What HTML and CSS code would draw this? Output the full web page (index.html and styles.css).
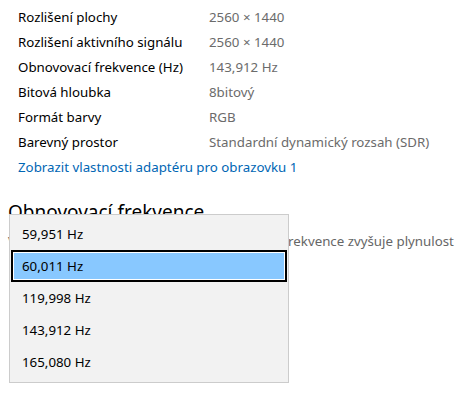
FILE: index.html
```html
<!DOCTYPE html>
<html lang="cs">
<head>
    <meta charset="UTF-8">
    <title>Rozšířené nastavení zobrazení</title>
    <link rel="stylesheet" href="styles.css">
</head>
<body>
    <div class="props">
        <div class="prop-row"><span class="label">Rozlišení plochy</span><span class="value">2560 × 1440</span></div>
        <div class="prop-row"><span class="label">Rozlišení aktivního signálu</span><span class="value">2560 × 1440</span></div>
        <div class="prop-row"><span class="label">Obnovovací frekvence (Hz)</span><span class="value">143,912 Hz</span></div>
        <div class="prop-row"><span class="label">Bitová hloubka</span><span class="value">8bitový</span></div>
        <div class="prop-row"><span class="label">Formát barvy</span><span class="value">RGB</span></div>
        <div class="prop-row"><span class="label">Barevný prostor</span><span class="value">Standardní dynamický rozsah (SDR)</span></div>
        <a class="adapter-link" href="#">Zobrazit vlastnosti adaptéru pro obrazovku 1</a>
    </div>

    <div class="refresh-section">
        <h2>Obnovovací frekvence</h2>
        <p class="hint">Vyberte obnovovací frekvenci displeje. Vyšší frekvence zvyšuje plynulost</p>

        <!-- open frequency list, drawn over the section -->
        <ul class="dropdown">
            <li>59,951 Hz</li>
            <li class="selected">60,011 Hz</li>
            <li>119,998 Hz</li>
            <li>143,912 Hz</li>
            <li>165,080 Hz</li>
        </ul>
    </div>
</body>
</html>
```

FILE: styles.css
```css
* {
    margin: 0;
    padding: 0;
    box-sizing: border-box;
}

html, body {
    min-height: 398px;
}

body {
    font-family: "Noto Sans", "Open Sans", sans-serif;
    font-size: 13.3px;
    color: #000;
    background: #fff;
}

.props {
    padding: 5px 0 0 18px;
}

.prop-row {
    display: grid;
    grid-template-columns: 191px 1fr;
    line-height: 25px;
}

.value {
    color: #6b6b6b;
}

.adapter-link {
    display: block;
    line-height: 25px;
    color: #0066b4;
    text-decoration: none;
}

.refresh-section {
    position: relative;
    min-height: 210px;
    padding: 18px 0 0 8px;
}

.refresh-section h2 {
    font-size: 19px;
    font-weight: normal;
    line-height: 28px;
}

.hint {
    margin-top: 5px;
    line-height: 20px;
    color: #666;
    white-space: nowrap;
}

.dropdown {
    position: absolute;
    top: 34px;
    left: 9px;
    width: 280px;
    list-style: none;
    background: #f2f2f2;
    border: 1px solid #cccccc;
    padding: 3px 1px 4px;
}

.dropdown li {
    height: 32px;
    line-height: 32px;
    padding-left: 11px;
}

.dropdown li.selected {
    background: #88c8ff;
    border: 2px solid #000;
    box-shadow: inset 0 0 0 1px #fff;
    line-height: 28px;
    padding-left: 9px;
}
```
